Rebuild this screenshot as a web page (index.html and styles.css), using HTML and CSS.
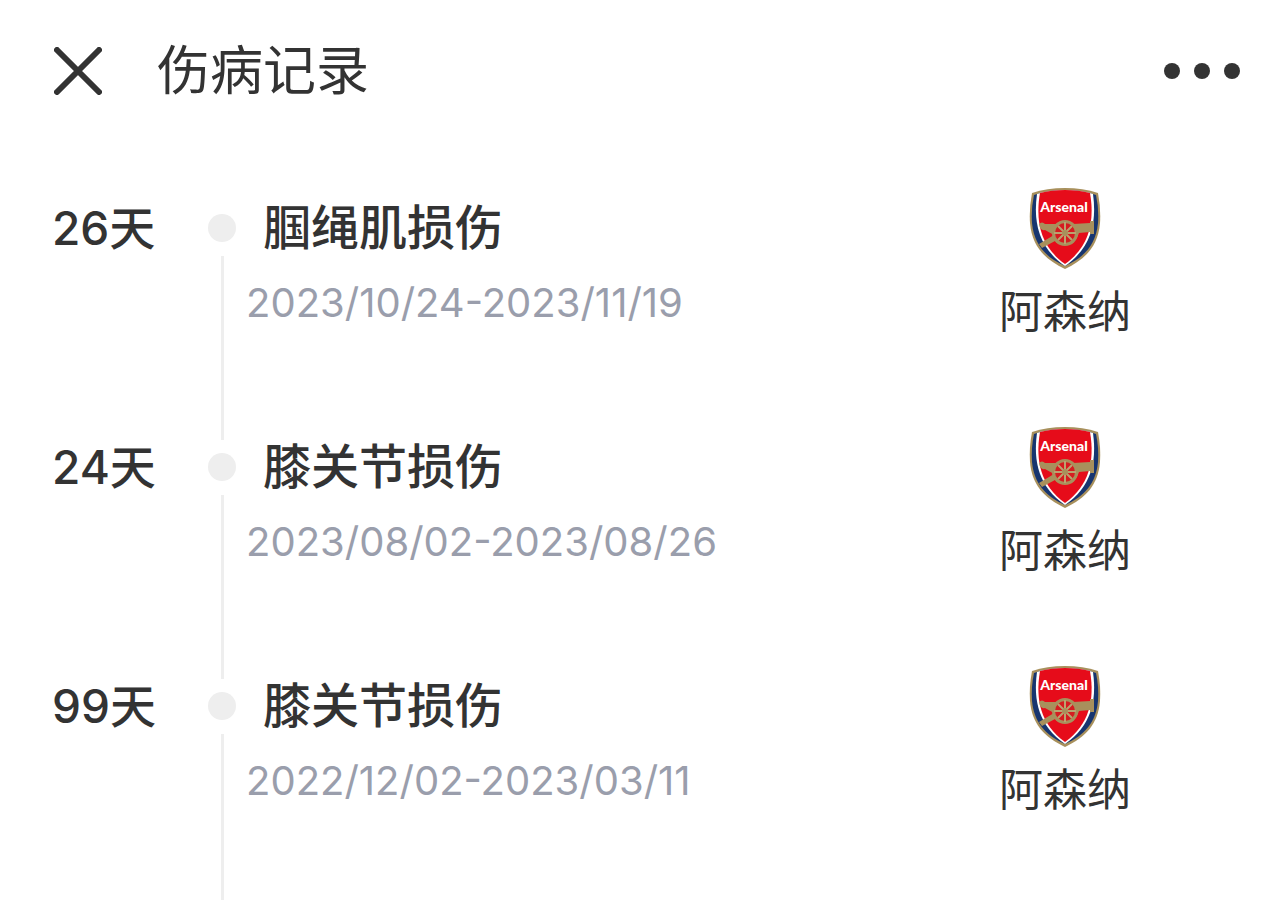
FILE: index.html
```html
<!DOCTYPE html>
<html lang="zh-CN">
<head>
<meta charset="UTF-8">
<meta name="viewport" content="width=device-width, initial-scale=1">
<title>伤病记录</title>
<link rel="stylesheet" href="styles.css">
</head>
<body>
<header class="bar">
  <button class="icon-button" type="button" aria-label="关闭">
    <svg width="48" height="48" viewBox="0 0 48 48" fill="none" stroke="#333" stroke-width="6" stroke-linecap="round"><path d="M3 3L45 45M45 3L3 45"/></svg>
  </button>
  <h1 class="bar-title">伤病记录</h1>
  <button class="icon-button" type="button" aria-label="更多">
    <svg width="76" height="16" viewBox="0 0 76 16" fill="#333"><circle cx="8" cy="8" r="8"/><circle cx="38" cy="8" r="8"/><circle cx="68" cy="8" r="8"/></svg>
  </button>
</header>
<main class="content">
  <ol class="timeline">
    <li class="record">
      <div class="days">26天</div>
      <div class="marker"></div>
      <div class="detail">
        <h2 class="injury">腘绳肌损伤</h2>
        <p class="dates">2023/10/24-2023/11/19</p>
      </div>
      <div class="club">
        <svg class="crest" viewBox="0 0 72 82" aria-hidden="true">
          <g id="crest">
            <path d="M3 6Q18 1 36 1Q54 1 69 6Q72 22 71 36C69 59 57 72 36 82C15 72 3 59 1 36Q0 22 3 6Z" fill="#a8905c"/>
            <path d="M5 8Q19 3 36 3Q53 3 67 8Q70 22 69 36C67 57 56 70 36 79C16 70 5 57 3 36Q2 22 5 8Z" fill="#17356f"/>
            <path d="M8 7Q20 3 36 3Q52 3 64 7C68 36 62 61 36 79C10 61 4 36 8 7Z" fill="#fff"/>
            <path d="M11 6Q22 3 36 3Q50 3 61 6C66 35 60 60 36 77C12 60 6 35 11 6Z" fill="#e60c1a"/>
            <path d="M10 37Q13 34 16 37L27 37Q36 31 44 37L61 36V34H65V47H61V45L50 46Q47 56 38 58L26 54L13 61L10 57L25 48L16 43Q11 44 10 37Z" fill="#a8905c"/>
            <circle cx="36" cy="46" r="13" fill="#a8905c"/>
            <circle cx="36" cy="46" r="10" fill="#d51c20"/>
            <path d="M36 35V57M25 46H47M29 39L43 53M43 39L29 53" stroke="#bba36f" stroke-width="2"/>
            <circle cx="36" cy="46" r="3" fill="#a8905c"/>
            <text class="crest-name" x="35" y="25" text-anchor="middle">Arsenal</text>
          </g>
        </svg>
        <span>阿森纳</span>
      </div>
    </li>
    <li class="record">
      <div class="days">24天</div>
      <div class="marker"></div>
      <div class="detail">
        <h2 class="injury">膝关节损伤</h2>
        <p class="dates">2023/08/02-2023/08/26</p>
      </div>
      <div class="club">
        <svg class="crest" viewBox="0 0 72 82" aria-hidden="true"><use href="#crest"/></svg>
        <span>阿森纳</span>
      </div>
    </li>
    <li class="record">
      <div class="days">99天</div>
      <div class="marker"></div>
      <div class="detail">
        <h2 class="injury">膝关节损伤</h2>
        <p class="dates">2022/12/02-2023/03/11</p>
      </div>
      <div class="club">
        <svg class="crest" viewBox="0 0 72 82" aria-hidden="true"><use href="#crest"/></svg>
        <span>阿森纳</span>
      </div>
    </li>
  </ol>
</main>
</body>
</html>
```
FILE: styles.css
```css
* {
  box-sizing: border-box;
  margin: 0;
  padding: 0;
}

body {
  display: flex;
  flex-direction: column;
  min-height: 100vh;
  background: #fff;
  color: #333;
  font-family: Inter, "Noto Sans CJK SC", sans-serif;
}

.bar {
  display: flex;
  align-items: center;
  padding: 31px 40px 30px 54px;
}

.icon-button {
  display: flex;
  border: 0;
  background: none;
  cursor: pointer;
}

.bar-title {
  flex: 1;
  margin-left: 55px;
  font-size: 53px;
  line-height: 80px;
  font-weight: 400;
}

.content {
  flex: 1;
  display: flex;
  padding-top: 60px;
}

.timeline {
  flex: 1;
  display: flex;
  flex-direction: column;
  list-style: none;
}

.record {
  display: flex;
  min-height: 239px;
  padding: 0 149px 0 52px;
}

.record:last-child {
  flex: 1;
  min-height: 0;
}

.days {
  width: 156px;
  font-size: 46px;
  line-height: 54px;
  font-weight: 500;
}

.marker {
  display: flex;
  flex-direction: column;
  align-items: center;
  gap: 14px;
  width: 28px;
  padding-top: 13px;
}

.marker::before {
  content: "";
  width: 28px;
  height: 28px;
  border-radius: 50%;
  background: #eee;
}

.marker::after {
  content: "";
  flex: 1;
  width: 3px;
  background: #eee;
}

.detail {
  flex: 1;
  padding-left: 10px;
}

.injury {
  padding-left: 17px;
  font-size: 48px;
  line-height: 54px;
  font-weight: 500;
}

.dates {
  margin-top: 20px;
  color: #9a9eac;
  font-size: 40px;
  line-height: 56px;
}

.club {
  display: flex;
  flex-direction: column;
  align-items: center;
  gap: 10px;
  margin-top: -14px;
  font-size: 44px;
  line-height: 66px;
}

.crest {
  width: 72px;
  height: 82px;
}

.crest-name {
  fill: #fff;
  font-family: Lato, sans-serif;
  font-size: 14px;
  font-weight: 900;
}
```
